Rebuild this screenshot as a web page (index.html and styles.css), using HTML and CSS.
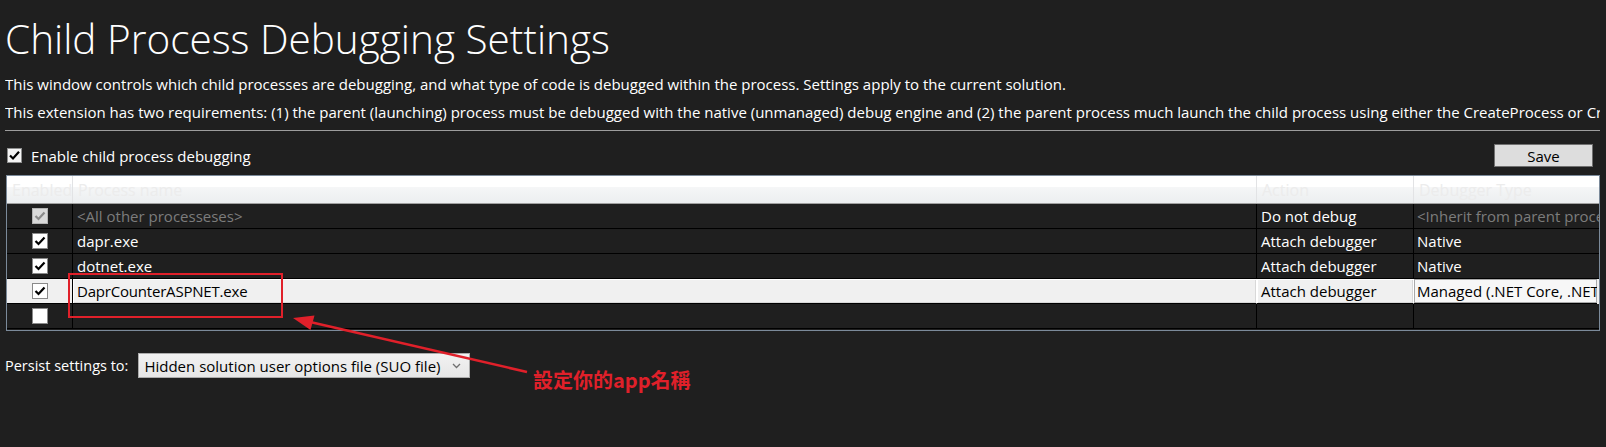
FILE: index.html
```html
<!DOCTYPE html>
<html>
<head>
<meta charset="utf-8">
<title>Child Process Debugging Settings</title>
<link rel="stylesheet" href="styles.css">
</head>
<body>
<div class="page">
  <h1 class="title">Child Process Debugging Settings</h1>
  <p class="desc">This window controls which child processes are debugging, and what type of code is debugged within the process. Settings apply to the current solution.</p>
  <p class="desc">This extension has two requirements: (1) the parent (launching) process must be debugged with the native (unmanaged) debug engine and (2) the parent process much launch the child process using either the CreateProcess or CreateProcessAsUser Win32 API.</p>
  <div class="rule"></div>
  <div class="toolbar">
    <label class="enable">
      <span class="cb">
        <svg viewBox="0 0 15 15" width="15" height="15"><path d="M3 7.5 L6 10.5 L12 3.8" fill="none" stroke="#000" stroke-width="2.2"/></svg>
      </span>
      <span>Enable child process debugging</span>
    </label>
    <button class="save">Save</button>
  </div>

  <div class="grid">
    <div class="row hdr">
      <div class="cell c-en">Enabled</div>
      <div class="cell">Process name</div>
      <div class="cell">Action</div>
      <div class="cell c-type">Debugger Type</div>
    </div>
    <div class="row">
      <div class="cell c-en"><span class="gcb disabled"><svg viewBox="0 0 16 16" width="16" height="16"><path d="M3.5 8 L6.5 11 L12.5 4.5" fill="none" stroke="#8a8a8a" stroke-width="2.2"/></svg></span></div>
      <div class="cell muted">&lt;All other processeses&gt;</div>
      <div class="cell">Do not debug</div>
      <div class="cell c-type muted">&lt;Inherit from parent process&gt;</div>
    </div>
    <div class="row">
      <div class="cell c-en"><span class="gcb"><svg viewBox="0 0 16 16" width="16" height="16"><path d="M3.5 8 L6.5 11 L12.5 4.5" fill="none" stroke="#000" stroke-width="2.2"/></svg></span></div>
      <div class="cell">dapr.exe</div>
      <div class="cell">Attach debugger</div>
      <div class="cell c-type">Native</div>
    </div>
    <div class="row">
      <div class="cell c-en"><span class="gcb"><svg viewBox="0 0 16 16" width="16" height="16"><path d="M3.5 8 L6.5 11 L12.5 4.5" fill="none" stroke="#000" stroke-width="2.2"/></svg></span></div>
      <div class="cell">dotnet.exe</div>
      <div class="cell">Attach debugger</div>
      <div class="cell c-type">Native</div>
    </div>
    <div class="row sel">
      <div class="cell c-en"><span class="gcb"><svg viewBox="0 0 16 16" width="16" height="16"><path d="M3.5 8 L6.5 11 L12.5 4.5" fill="none" stroke="#000" stroke-width="2.2"/></svg></span></div>
      <div class="cell c-edit caps">DaprCounterASPNET.exe</div>
      <div class="cell c-edit">Attach debugger</div>
      <div class="cell c-type c-edit2">Managed (.NET Core, .NET 5+)</div>
    </div>
    <div class="row">
      <div class="cell c-en"><span class="gcb"></span></div>
      <div class="cell"></div>
      <div class="cell"></div>
      <div class="cell c-type"></div>
    </div>
  </div>

  <div class="persist">
    <span class="plabel">Persist settings to:</span>
    <div class="select">
      <span>Hidden solution user options file (SUO file)</span>
      <svg class="chev" viewBox="0 0 9 6" width="9" height="6"><path d="M1 1 L4.5 4.5 L8 1" fill="none" stroke="#707070" stroke-width="1.3"/></svg>
    </div>
  </div>
</div>

<svg class="annot" viewBox="0 0 1606 447" width="1606" height="447">
  <rect x="69" y="274" width="213" height="43" fill="none" stroke="#e0202a" stroke-width="2"/>
  <line x1="527" y1="372" x2="308" y2="321.5" stroke="#e0202a" stroke-width="2.5"/>
  <polygon points="293,318 314.5,315.5 310.5,330" fill="#e0202a"/>
</svg>
<div class="annot-text">設定你的app名稱</div>
</body>
</html>
```
FILE: styles.css
```css
html, body {
  margin: 0;
  padding: 0;
}
body {
  width: 1606px;
  height: 447px;
  overflow: hidden;
  background: #1f1f1f;
  color: #ffffff;
  font-family: "Open Sans", "Noto Sans", sans-serif;
  position: relative;
}
.page {
  padding: 0 6px 0 5px;
}
.title {
  margin: 11px 0 0;
  height: 56px;
  font-size: 40.5px;
  line-height: 56px;
  font-weight: 300;
  white-space: nowrap;
}
.desc {
  margin: 0;
  height: 28px;
  font-size: 15px;
  line-height: 28px;
  white-space: nowrap;
  overflow: hidden;
}
.desc:first-of-type {
  margin-top: 3px;
}
.rule {
  margin-top: 4px;
  height: 1px;
  background: #9d9d9d;
}
.toolbar {
  margin-top: 13px;
  height: 23px;
  display: flex;
  align-items: center;
  justify-content: space-between;
}
.enable {
  display: flex;
  align-items: center;
  font-size: 15px;
  gap: 9px;
  padding-left: 2px;
}
.cb {
  width: 15px;
  height: 15px;
  box-sizing: border-box;
  border: 1px solid #8e8f8f;
  background: #f4f4f4;
  display: flex;
}
.cb svg { margin: -1px; }
.save {
  width: 99px;
  height: 23px;
  margin-right: 7px;
  box-sizing: border-box;
  border: 1px solid #707070;
  background: #dddddd;
  color: #000;
  font-family: inherit;
  font-size: 15px;
  padding: 0;
  line-height: 20px;
}
.grid {
  margin: 8px 0 0 1px;
  width: 1594px;
  height: 156px;
  box-sizing: border-box;
  border: 1px solid #7b8a9a;
  background: #1f1f1f;
}
.row {
  display: grid;
  grid-template-columns: 66px 1184px 157px 185px;
  height: 25px;
  font-size: 15px;
}
.cell {
  box-sizing: border-box;
  border-right: 1px solid #000;
  border-bottom: 1px solid #000;
  padding-left: 4px;
  display: flex;
  align-items: center;
  white-space: nowrap;
  overflow: hidden;
}
.caps {
  letter-spacing: -0.2px;
}
.c-type {
  border-right: none;
  padding-left: 3px;
}
.c-en {
  justify-content: center;
  padding-left: 0;
}
.hdr {
  height: 28px;
  background: linear-gradient(#ffffff 0, #ffffff 11px, #f5f6f7 11px, #eceef0 100%);
  border-bottom: 1px solid #a0a0a0;
  box-sizing: border-box;
  color: #ececec;
  font-size: 16px;
}
.hdr .cell {
  border-bottom: none;
  border-right: 1px solid #e2e3e5;
  padding-left: 5px;
  justify-content: flex-start;
}
.hdr .c-type { border-right: none; }
.muted { color: #7c7c7c; }
.gcb {
  width: 16px;
  height: 16px;
  box-sizing: border-box;
  border: 1px solid #8a8a8a;
  background: #ffffff;
  display: flex;
}
.gcb svg { margin: -1px; }
.gcb.disabled {
  background: #d9d9d9;
  border-color: #b3b3b3;
}
.sel {
  background: #f0f0f0;
  color: #000;
}
.sel .cell {
  border-bottom-color: #000;
}
.sel .c-edit {
  box-shadow: inset 1px 1px 0 #ffffff, inset -1px -1px 0 #d8d8d8;
  border-right-color: #ffffff;
}
.sel .c-edit2 {
  background: #f7f7f7;
  box-shadow: inset 0 0 0 1px #a9a9a9;
  margin-right: 2px;
}
.persist {
  margin-top: 22px;
  display: flex;
  align-items: center;
  gap: 10px;
  font-size: 14.5px;
}
.select {
  width: 332px;
  height: 25px;
  box-sizing: border-box;
  border: 1px solid #acacac;
  background: linear-gradient(#f2f2f2, #e6e6e6);
  color: #000;
  display: flex;
  align-items: center;
  justify-content: space-between;
  padding: 0 8px 0 5px;
  font-size: 15px;
}
.annot {
  position: absolute;
  left: 0;
  top: 0;
  pointer-events: none;
}
.annot-text {
  position: absolute;
  left: 533px;
  top: 365px;
  font-family: "Noto Sans CJK TC", "Noto Sans", sans-serif;
  font-weight: 700;
  font-size: 20px;
  line-height: 30px;
  color: #e0202a;
  white-space: nowrap;
}
```
